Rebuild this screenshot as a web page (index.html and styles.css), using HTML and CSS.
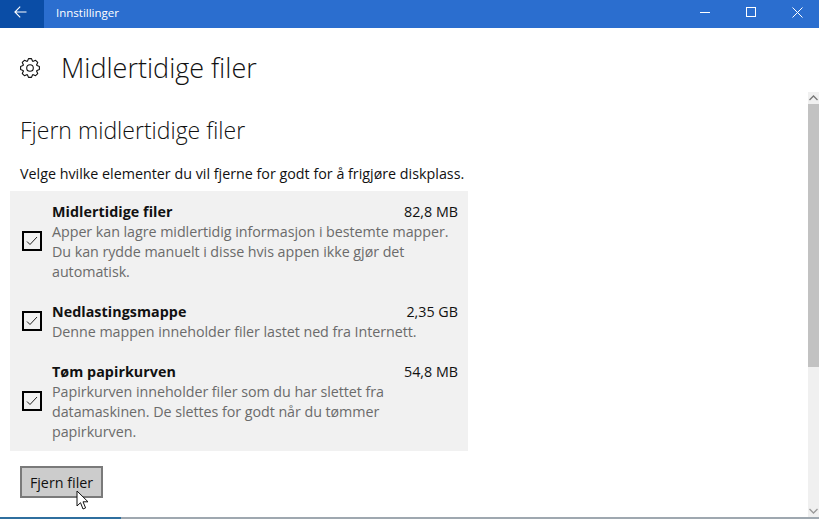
FILE: index.html
```html
<!DOCTYPE html>
<html lang="nb">
<head>
<meta charset="utf-8">
<title>Innstillinger</title>
<link rel="stylesheet" href="styles.css">
</head>
<body>
<div class="window">
  <header class="titlebar">
    <button class="back" aria-label="Tilbake">
      <svg width="13" height="12" viewBox="0 0 13 12"><path d="M12.500 6H1M6.200 .7 .9 6l5.300 5.300" fill="none" stroke="#fff" stroke-width="1.100"/></svg>
    </button>
    <span class="app-name">Innstillinger</span>
    <div class="controls">
      <svg width="10" height="10" viewBox="0 0 10 10"><path d="M0 5.500h10" stroke="#fff" stroke-width="1"/></svg>
      <svg width="10" height="10" viewBox="0 0 10 10"><rect x=".5" y=".5" width="9" height="9" fill="none" stroke="#fff"/></svg>
      <svg width="11" height="11" viewBox="0 0 11 11"><path d="M.5.5l10 10M10.500.5l-10 10" stroke="#fff" stroke-width="1"/></svg>
    </div>
  </header>
  <div class="body">
    <main class="content">
      <div class="page-head">
        <svg class="gear" width="20" height="20" viewBox="0 0 20 20">
          <defs><path id="tooth" d="M7.320 3.530 8.500 .6H11.500L12.680 3.530"/></defs>
          <g fill="none" stroke="#111" stroke-width="1.100" stroke-linejoin="round">
            <circle cx="10" cy="10" r="3.300"/>
            <use href="#tooth"/>
            <use href="#tooth" transform="rotate(45 10 10)"/>
            <use href="#tooth" transform="rotate(90 10 10)"/>
            <use href="#tooth" transform="rotate(135 10 10)"/>
            <use href="#tooth" transform="rotate(180 10 10)"/>
            <use href="#tooth" transform="rotate(225 10 10)"/>
            <use href="#tooth" transform="rotate(270 10 10)"/>
            <use href="#tooth" transform="rotate(315 10 10)"/>
          </g>
        </svg>
        <h1>Midlertidige filer</h1>
      </div>
      <h2>Fjern midlertidige filer</h2>
      <p class="lead">Velge hvilke elementer du vil fjerne for godt for å frigjøre diskplass.</p>
      <section class="panel">
        <div class="item">
          <span class="check"><svg width="16" height="16" viewBox="0 0 16 16"><path d="M3 8.500l3 3 7-7.500" fill="none" stroke="#222" stroke-width="1"/></svg></span>
          <div class="info">
            <div class="item-head"><strong>Midlertidige filer</strong><span>82,8 MB</span></div>
            <p>Apper kan lagre midlertidig informasjon i bestemte mapper. Du kan rydde manuelt i disse hvis appen ikke gjør det automatisk.</p>
          </div>
        </div>
        <div class="item">
          <span class="check"><svg width="16" height="16" viewBox="0 0 16 16"><path d="M3 8.500l3 3 7-7.500" fill="none" stroke="#222" stroke-width="1"/></svg></span>
          <div class="info">
            <div class="item-head"><strong>Nedlastingsmappe</strong><span>2,35 GB</span></div>
            <p>Denne mappen inneholder filer lastet ned fra Internett.</p>
          </div>
        </div>
        <div class="item">
          <span class="check"><svg width="16" height="16" viewBox="0 0 16 16"><path d="M3 8.500l3 3 7-7.500" fill="none" stroke="#222" stroke-width="1"/></svg></span>
          <div class="info">
            <div class="item-head"><strong>Tøm papirkurven</strong><span>54,8 MB</span></div>
            <p>Papirkurven inneholder filer som du har slettet fra datamaskinen. De slettes for godt når du tømmer papirkurven.</p>
          </div>
        </div>
      </section>
      <button class="remove">Fjern filer</button>
    </main>
    <aside class="scrollbar">
      <span class="arrow"><svg width="9" height="6" viewBox="0 0 9 6"><path d="M.5 5l4-4 4 4" fill="none" stroke="#777" stroke-width="1.300"/></svg></span>
      <span class="thumb"></span>
      <span class="rest"></span>
      <span class="arrow"><svg width="9" height="6" viewBox="0 0 9 6"><path d="M.5 1l4 4 4-4" fill="none" stroke="#999" stroke-width="1.300"/></svg></span>
    </aside>
  </div>
  <footer class="taskbar"><span class="taskbar-fill"></span></footer>
  <svg class="cursor" width="14" height="21" viewBox="0 0 14 21"><path d="M1 1v15l3.500-3.300 2.500 6.300 2.600-1.100-2.600-6.100h5z" fill="#fff" stroke="#111" stroke-width="1"/></svg>
</div>
</body>
</html>
```
FILE: styles.css
```css
* { box-sizing: border-box; }
html, body { margin: 0; height: 100%; }
body { font-family: "Open Sans", "Noto Sans", sans-serif; color: #111; background: #fff; overflow: hidden; }
.window { position: relative; width: 819px; height: 519px; display: flex; flex-direction: column; }
.titlebar { height: 28px; flex: none; display: flex; align-items: center; background: #2b6ecf; color: #fff; }
.back { width: 44px; height: 28px; border: 0; padding: 0 4px 4px 0; background: #0a4da6; display: flex; align-items: center; justify-content: center; }
.app-name { margin-left: 12px; padding-bottom: 3px; font-size: 11.500px; }
.controls { margin-left: auto; display: flex; align-items: center; gap: 36px; padding: 0 16px 4px 0; }
.body { flex: 1; min-height: 0; display: flex; }
.content { flex: 1; min-width: 0; padding: 0 0 0 10px; }
.page-head { display: flex; align-items: center; height: 40px; margin-top: 20px; padding-left: 10px; }
.gear { flex: none; }
h1 { margin: 0 0 0 21px; font-size: 27px; font-weight: 300; line-height: 40px; }
h2 { margin: 26px 0 0 10px; font-size: 23px; font-weight: 300; line-height: 32px; }
.lead { margin: 18px 0 0 10px; font-size: 14.300px; line-height: 20px; }
.panel { width: 458px; height: 260px; margin-top: 7px; padding-top: 11px; background: #f1f1f1; display: flex; flex-direction: column; gap: 20px; }
.item { display: flex; align-items: center; padding: 0 10px 0 12px; }
.check { width: 20px; height: 20px; flex: none; margin-bottom: 2px; border: 2px solid #000; display: flex; align-items: center; justify-content: center; }
.info { flex: 1; min-width: 0; margin-left: 10px; }
.item-head { display: flex; justify-content: space-between; font-size: 14.300px; line-height: 20px; }
.item-head strong { font-weight: 700; letter-spacing: .05px; }
.info p { margin: 0; color: #6b6b6b; font-size: 14.300px; line-height: 20px; letter-spacing: -.05px; }
.remove { display: block; width: 83px; height: 32px; margin: 15px 0 0 10px; padding: 0; border: 2px solid #7a7a7a; background: #ccc; color: #111; font: 14.300px "Open Sans", "Noto Sans", sans-serif; }
.scrollbar { width: 11px; flex: none; margin-top: 64px; display: flex; flex-direction: column; background: #f0f0f0; }
.arrow { height: 12px; flex: none; display: flex; align-items: center; justify-content: center; }
.thumb { height: 263px; flex: none; background: #c2c2c2; }
.rest { flex: 1; }
.taskbar { height: 2px; flex: none; background: #9fa8b0; }
.taskbar-fill { display: block; width: 121px; height: 2px; background: #2f6f9f; }
.cursor { position: absolute; left: 76px; top: 490px; }
```
